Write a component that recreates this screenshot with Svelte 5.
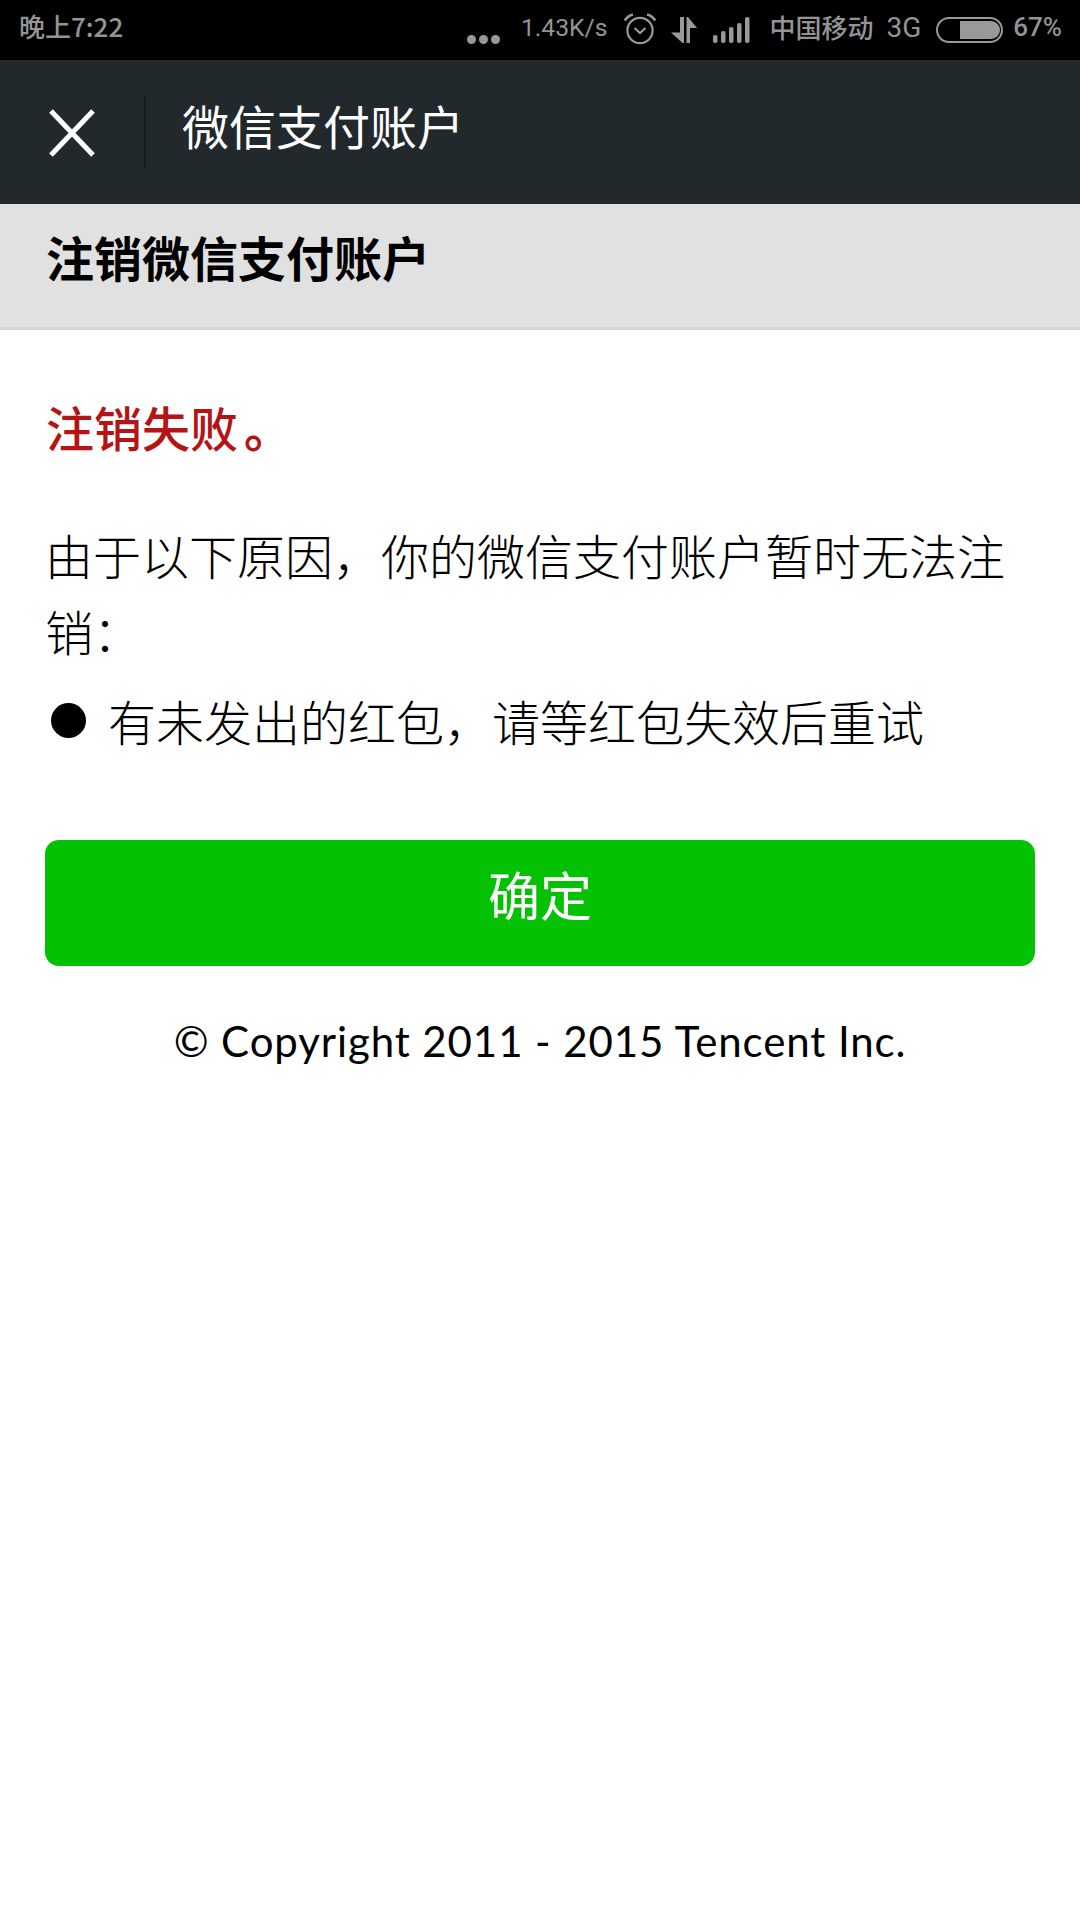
<script lang="ts">
  const reasons = ['有未发出的红包，请等红包失效后重试'];
</script>

<div class="page">
  <div class="status">
    <span class="time">晚上7:22</span>
    <div class="status-right">
      <span class="dots"><i></i><i></i><i></i></span>
      <span class="speed">1.43K/s</span>
      <svg class="alarm" width="32" height="32" viewBox="0 0 32 32" fill="none" stroke="#999">
        <circle cx="16" cy="17.5" r="12.6" stroke-width="2.2" />
        <path d="M10.5 15 16 20 21.5 15" stroke-width="2.2" />
        <path d="M.8 7.5Q3.5 3 9 1.5M31.2 7.5Q28.500 3 23 1.500" stroke-width="2.8" />
      </svg>
      <svg class="arrows" width="26" height="26" viewBox="0 0 26 26" fill="#999">
        <path d="M9 0h4v26h-1.500L0 15.500h9zM15.500 0H17l9 11h-7v15h-3.500z" />
      </svg>
      <svg class="signal" width="37" height="26" viewBox="0 0 37 26" fill="#999">
        <rect x="0" y="18" width="4.500" height="8" rx="2" />
        <rect x="8" y="14" width="4.500" height="12" rx="2" />
        <rect x="16" y="10" width="4.500" height="16" rx="2" />
        <rect x="24" y="6" width="4.500" height="20" rx="2" />
        <rect x="32" y="0" width="4.500" height="26" rx="2" />
      </svg>
      <span class="carrier">中国移动</span>
      <span class="net">3G</span>
      <span class="battery"><span class="level"></span></span>
      <span class="percent">67%</span>
    </div>
  </div>

  <header class="nav">
    <svg class="close" width="46" height="48" viewBox="0 0 46 48" stroke="#fff" stroke-width="5">
      <path d="M2 2 44 46M44 2 2 46" />
    </svg>
    <span class="divider"></span>
    <span class="nav-title">微信支付账户</span>
  </header>

  <div class="section-head">注销微信支付账户</div>

  <main class="content">
    <p class="fail">注销失败<span class="stop">。</span></p>
    <p class="intro">由于以下原因，你的微信支付账户暂时无法注销：</p>
    <ul class="reasons">
      {#each reasons as reason}
        <li><span class="bullet"></span>{reason}</li>
      {/each}
    </ul>
    <button class="ok">确定</button>
    <p class="copyright">© Copyright 2011 - 2015 Tencent Inc.</p>
  </main>
</div>

<style>
  :global(body) {
    background: #fff;
  }

  .page {
    width: 1080px;
    height: 1920px;
    background: #fff;
    overflow: hidden;
    font-family: "Noto Sans CJK SC", "Noto Sans", sans-serif;
    font-weight: 300;
    color: #000;
  }

  .status {
    height: 60px;
    background: #000;
    color: #949494;
    display: flex;
    align-items: center;
    justify-content: space-between;
    padding: 0 18px 0 19px;
    box-sizing: border-box;
  }

  .time {
    font-size: 26px;
    font-weight: 500;
    line-height: 52px;
    align-self: flex-start;
  }

  .status-right {
    display: flex;
    align-items: center;
    height: 60px;
  }

  .dots {
    display: flex;
    gap: 3px;
    margin-top: 18px;
  }

  .dots i {
    width: 9px;
    height: 9px;
    border-radius: 50%;
    background: #999;
  }

  .speed {
    font-family: "Roboto", sans-serif;
    font-weight: 400;
    font-size: 24.7px;
    margin-left: 21px;
    margin-top: -6px;
  }

  .alarm {
    margin-left: 17px;
    margin-top: -2px;
  }

  .arrows {
    margin-left: 15px;
  }

  .signal {
    margin-left: 16px;
  }

  .carrier {
    font-size: 26px;
    font-weight: 500;
    margin-left: 19px;
    margin-top: -8px;
  }

  .net {
    font-family: "Roboto", sans-serif;
    font-weight: 400;
    font-size: 28px;
    margin-left: 13px;
    margin-top: -5px;
  }

  .battery {
    width: 67px;
    height: 26px;
    box-sizing: border-box;
    border: 2px solid #999;
    border-radius: 13px;
    margin-left: 15px;
    padding: 2px 1px;
    display: flex;
    justify-content: flex-end;
  }

  .level {
    width: 40px;
    background: #999;
    border-radius: 0 9px 9px 0;
  }

  .percent {
    font-family: "Roboto", sans-serif;
    font-size: 26px;
    font-weight: 500;
    margin-left: 10px;
    margin-top: -6px;
  }

  .nav {
    height: 144px;
    background: #22292c;
    display: flex;
    align-items: center;
    color: #fff;
    box-sizing: border-box;
    padding-left: 49px;
  }

  .close {
    margin-top: 1px;
  }

  .divider {
    width: 2px;
    height: 72px;
    background: #161b1e;
    margin-left: 49px;
  }

  .nav-title {
    font-size: 47px;
    font-weight: 400;
    margin-left: 36px;
    margin-top: -16px;
  }

  .section-head {
    height: 126px;
    box-sizing: border-box;
    background: #e1e1e1;
    border-bottom: 3px solid #d6d6d6;
    padding-left: 46px;
    font-size: 48px;
    font-weight: 700;
    line-height: 104px;
  }

  .content {
    padding: 0 45px;
  }

  p {
    margin: 0;
  }

  .fail {
    color: #b51414;
    font-size: 48px;
    font-weight: 500;
    line-height: 76px;
    margin-top: 58px;
    padding-left: 1px;
  }

  .stop {
    margin-left: 6px;
    font-weight: 700;
  }

  .intro {
    font-size: 48px;
    line-height: 76px;
    margin-top: 52px;
  }

  .reasons {
    list-style: none;
    margin: 14px 0 0;
    padding: 0;
    font-size: 48px;
    line-height: 76px;
  }

  .reasons li {
    display: flex;
    align-items: center;
    white-space: nowrap;
  }

  .bullet {
    width: 35px;
    height: 35px;
    border-radius: 50%;
    background: #000;
    margin: 0 22px 0 6px;
  }

  .ok {
    display: block;
    width: 990px;
    height: 126px;
    margin-top: 82px;
    border: 0;
    border-radius: 14px;
    background: #05c103;
    color: #fff;
    font-family: inherit;
    font-size: 52px;
    font-weight: 400;
    padding: 0 0 19px;
  }

  .copyright {
    text-align: center;
    font-family: "Lato", sans-serif;
    font-weight: 400;
    font-size: 42px;
    letter-spacing: 0.9px;
    margin-top: 47px;
    line-height: 56px;
  }
</style>
